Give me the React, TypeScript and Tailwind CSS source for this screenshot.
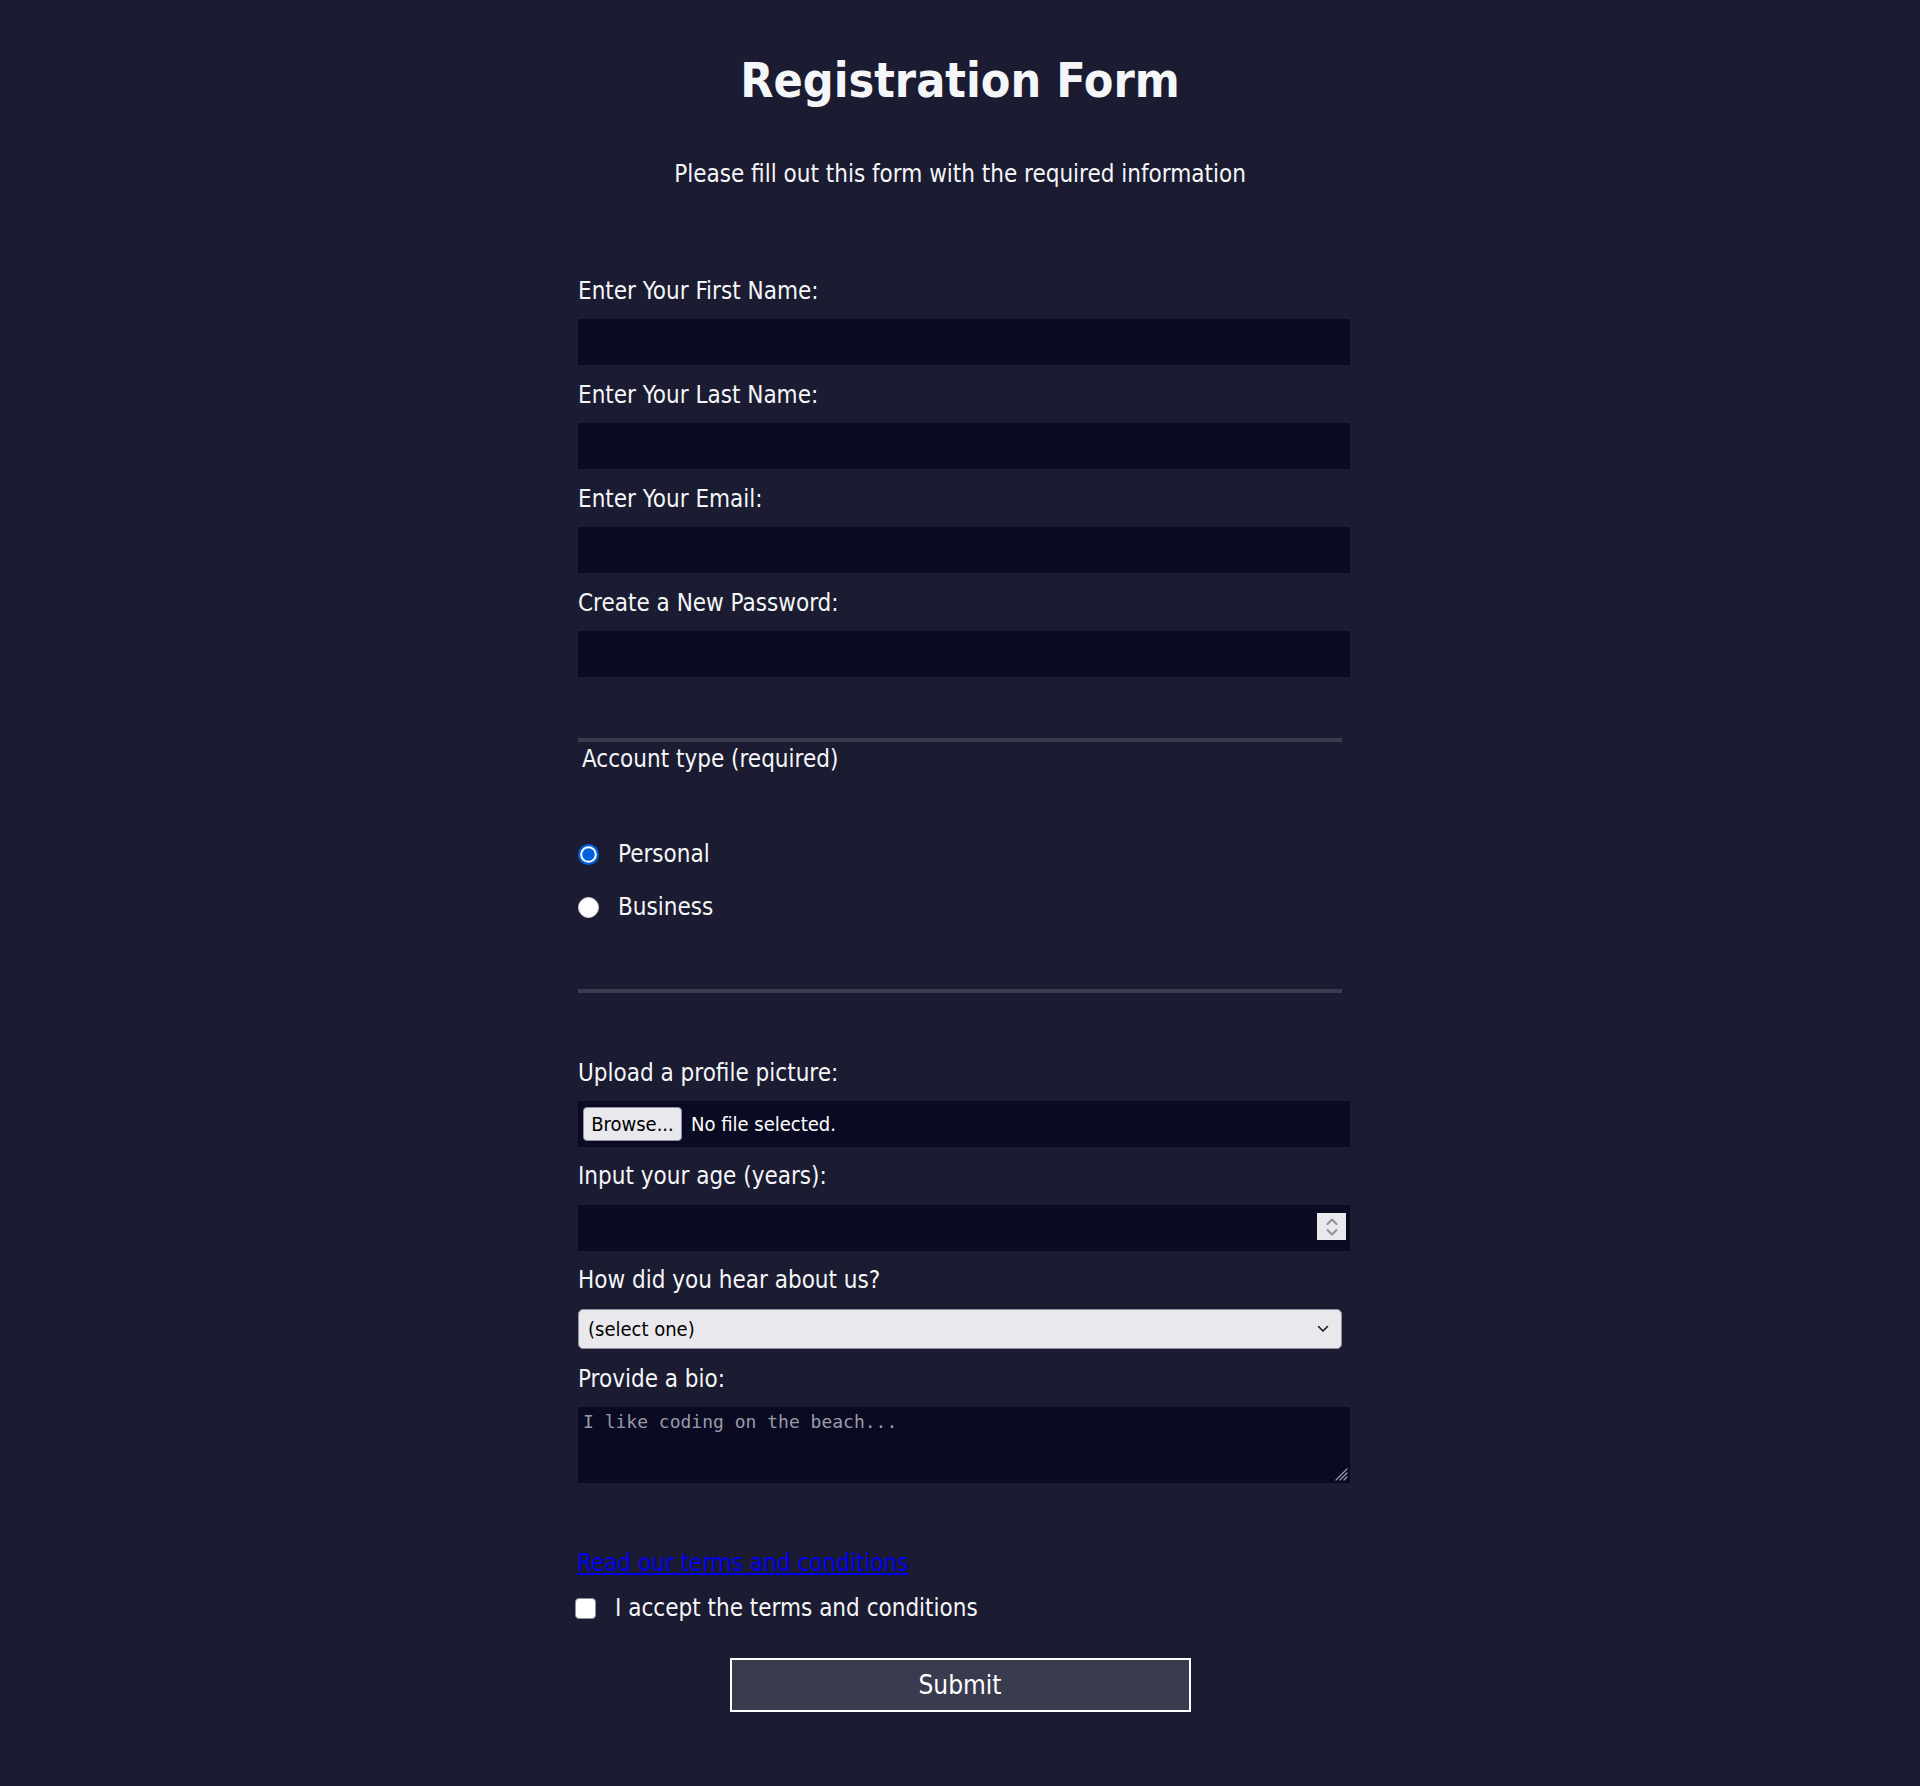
import type { ReactNode } from "react";

const Field = ({ text, children, className = "" }: { text: string; children: ReactNode; className?: string }) => (
  <label className={`flex flex-col ${className}`}>
    <span className="h-[29px] leading-[33px] whitespace-nowrap">{text}</span>
    {children}
  </label>
);

const RadioChecked = () => (
  <svg width="21" height="21" viewBox="0 0 21 21" className="shrink-0">
    <circle cx="10.5" cy="10.5" r="10.5" fill="#0060df" />
    <circle cx="10.5" cy="10.5" r="8.3" fill="#ffffff" />
    <circle cx="10.5" cy="10.5" r="6.3" fill="#0060df" />
  </svg>
);

const RadioEmpty = () => (
  <svg width="21" height="21" viewBox="0 0 21 21" className="shrink-0">
    <circle cx="10.5" cy="10.5" r="10" fill="#ffffff" stroke="#d0d0d7" strokeWidth="1" />
  </svg>
);

export default function App() {
  return (
    <div className="min-h-[1786px] bg-[#1b1b32] text-[#f5f6f7] text-[24px] font-['DejaVu_Sans_Condensed','DejaVu_Sans',Tahoma,sans-serif]">
      <h1 className="pt-[51px] text-center text-[48px] leading-[58px] font-bold">Registration Form</h1>
      <p className="mt-[50px] text-center leading-[31px]">Please fill out this form with the required information</p>

      <form className="mx-auto w-[764px]" onSubmit={(e) => e.preventDefault()}>
        {/* personal details */}
        <div className="flex flex-col gap-[14px] pt-[85px] pb-[61px] border-b-4 border-[#3b3b4f]">
          <Field text="Enter Your First Name:">
            <div className="mt-[15px] h-[46px] w-[772px] bg-[#0a0a23]" />
          </Field>
          <Field text="Enter Your Last Name:">
            <div className="mt-[15px] h-[46px] w-[772px] bg-[#0a0a23]" />
          </Field>
          <Field text="Enter Your Email:">
            <div className="mt-[15px] h-[46px] w-[772px] bg-[#0a0a23]" />
          </Field>
          <Field text="Create a New Password:">
            <div className="mt-[15px] h-[46px] w-[772px] bg-[#0a0a23]" />
          </Field>
        </div>

        {/* account type */}
        <div className="flex flex-col pb-[67px] border-b-4 border-[#3b3b4f]">
          <div className="mt-[2px] h-[29px] leading-[31px] pl-[4px]">Account type (required)</div>
          <label className="mt-[67px] flex h-[29px] items-center gap-[19px] leading-[29px]">
            <RadioChecked />
            <span>Personal</span>
          </label>
          <label className="mt-[24px] flex h-[29px] items-center gap-[19px] leading-[29px]">
            <RadioEmpty />
            <span>Business</span>
          </label>
        </div>

        {/* extra info */}
        <div className="flex flex-col pt-[64px]">
          <Field text="Upload a profile picture:">
            <div className="mt-[15px] flex h-[46px] w-[772px] items-center bg-[#0a0a23] pl-[5px]">
              <div className="flex h-[34px] w-[99px] items-center justify-center rounded-[4px] border border-[#8f8f9d] bg-[#e9e9ed] text-[20px] text-black">
                Browse...
              </div>
              <span className="ml-[9px] text-[20px] text-white">No file selected.</span>
            </div>
          </Field>
          <Field text="Input your age (years):" className="mt-[13px]">
            <div className="relative mt-[16px] h-[46px] w-[772px] bg-[#0a0a23]">
              <div className="absolute right-[4px] top-[8px] flex h-[27px] w-[29px] items-center justify-center bg-[#e9e9ed]">
                <svg width="16" height="24" viewBox="0 0 16 24" fill="none" stroke="#8f8f9d" strokeWidth="2" strokeLinecap="round" strokeLinejoin="round">
                  <path d="M3.5 9 L8 4.5 L12.5 9" />
                  <path d="M3.5 15 L8 19.5 L12.5 15" />
                </svg>
              </div>
            </div>
          </Field>
          <Field text="How did you hear about us?" className="mt-[13px]">
            <div className="mt-[16px] flex h-[40px] w-[764px] items-center justify-between rounded-[5px] border border-[#8f8f9d] bg-[#e9e9ed] pl-[9px] pr-[12px] text-[20px] text-black">
              <span>(select one)</span>
              <svg width="12" height="8" viewBox="0 0 12 8" fill="none" stroke="#1b1b1b" strokeWidth="1.6" strokeLinecap="round" strokeLinejoin="round">
                <path d="M1.5 1.5 L6 6 L10.5 1.5" />
              </svg>
            </div>
          </Field>
          <Field text="Provide a bio:" className="mt-[14px]">
            <div className="relative mt-[15px] h-[76px] w-[772px] bg-[#0a0a23] px-[5px] pt-[2px]">
              <span className="block font-['DejaVu_Sans_Mono',monospace] text-[18px] leading-[26px] text-[#9a9aa6]">
                I like coding on the beach...
              </span>
              <svg className="absolute bottom-[2px] right-[2px]" width="14" height="14" viewBox="0 0 14 14" stroke="#9a9aa6" strokeWidth="1.2" strokeLinecap="round">
                <path d="M13 2 L2 13 M13 6 L6 13 M13 10 L10 13" />
              </svg>
            </div>
          </Field>

          <a href="#" className="-ml-[1px] mt-[64px] h-[29px] leading-[33px] self-start text-[#0000ee] underline">
            Read our terms and conditions
          </a>
          <label className="-ml-[3px] mt-[18px] flex h-[29px] items-center gap-[19px] leading-[29px]">
            <span className="h-[21px] w-[21px] shrink-0 rounded-[4px] border border-[#8f8f9d] bg-white" />
            <span>I accept the terms and conditions</span>
          </label>

          <button
            type="submit"
            className="mx-auto mt-[35px] h-[54px] w-[461px] border-2 border-white bg-[#3b3b4f] text-[26px] text-white"
          >
            Submit
          </button>
        </div>
      </form>
    </div>
  );
}
